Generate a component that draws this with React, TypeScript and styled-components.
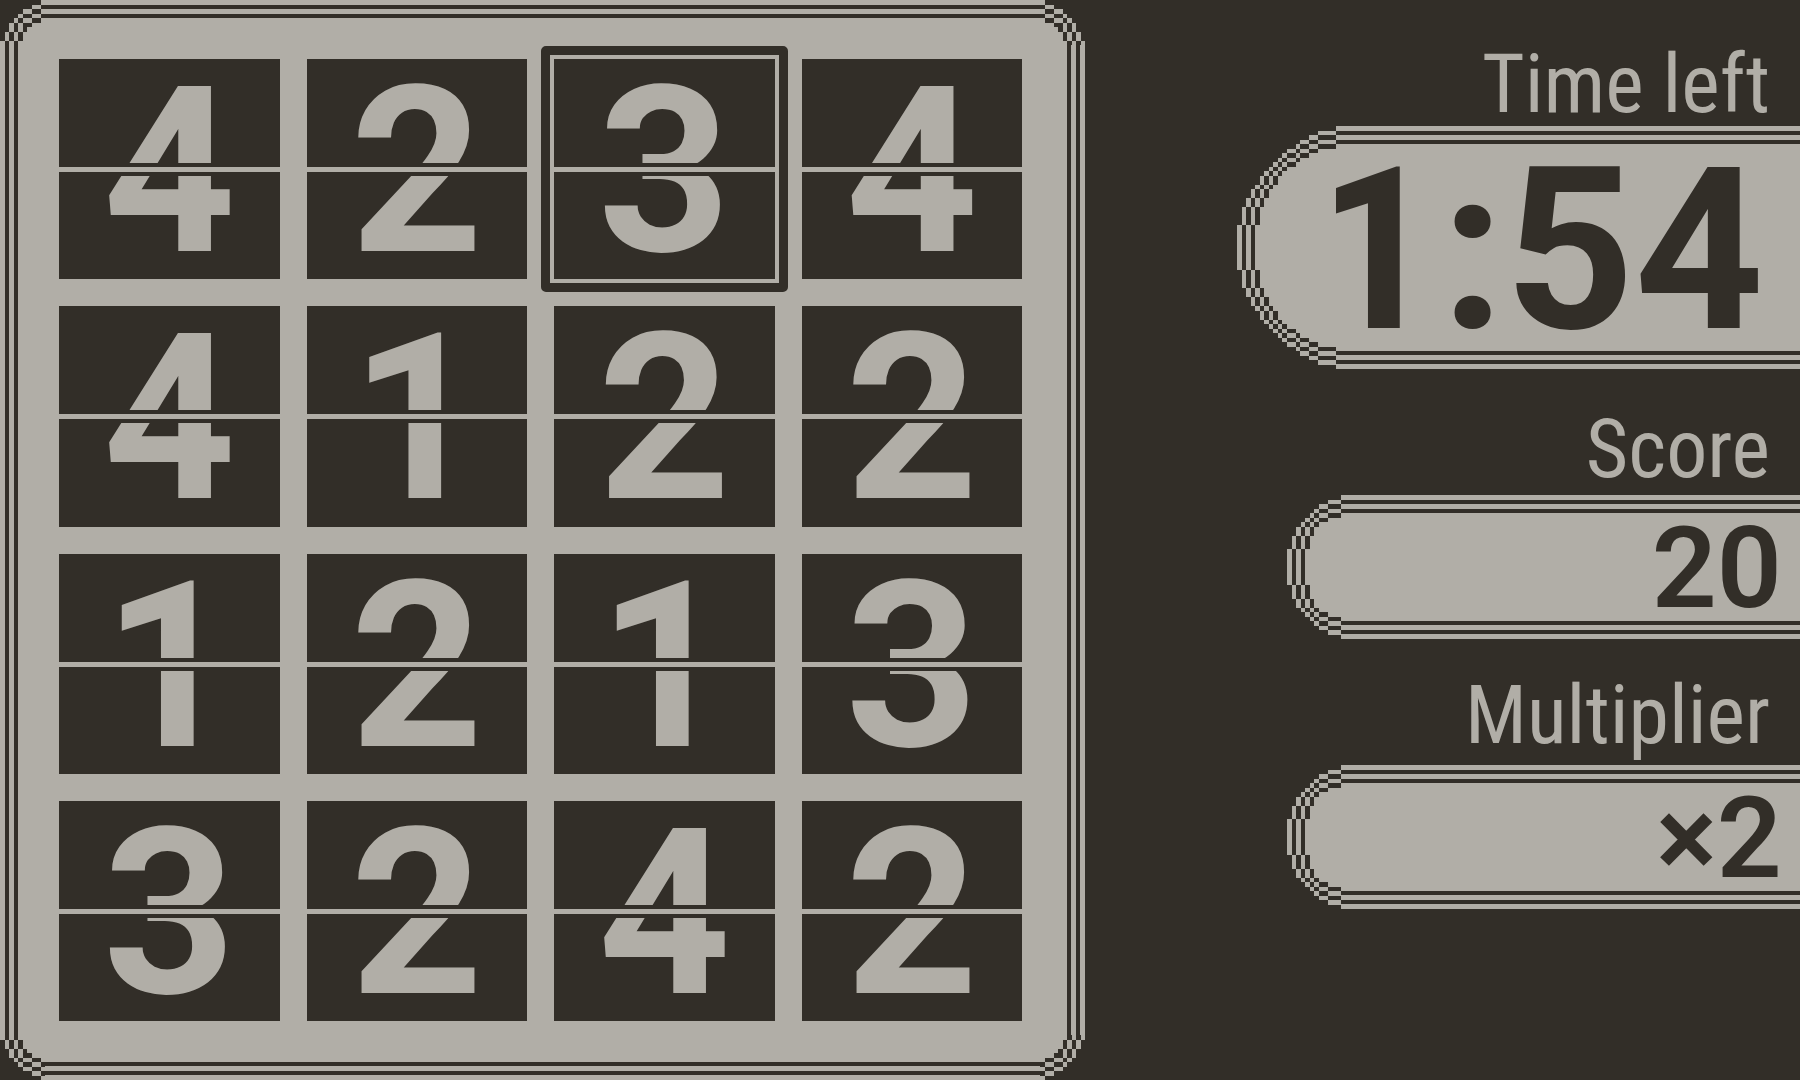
import React, { useState } from "react";
import styled, { createGlobalStyle } from "styled-components";

const INK = "#322e28";
const PAPER = "#b1aea7";
const CELL = 4.5;

const GlobalStyle = createGlobalStyle`
  *, *::before, *::after { box-sizing: border-box; }
  body { margin: 0; background: ${INK}; color: ${PAPER}; font-family: Roboto, "Liberation Sans", sans-serif; }
`;

// Stepped corner outlines: for each column, how many cells lie outside the frame.
const PROFILES = {
  board: [9, 7, 5, 4, 3, 2, 2, 1, 1, 0],
  small: [12, 9, 7, 6, 5, 4, 3, 2, 2, 1, 1, 1],
  large: [22, 18, 16, 14, 13, 11, 10, 9, 8, 7, 6, 5, 5, 4, 3, 3, 2, 2, 1, 1, 1, 1],
};
type FrameKind = keyof typeof PROFILES;
type Spot = "tl" | "tr" | "bl" | "br";

const FLIPS: Record<Spot, string> = {
  tl: "top: 0; left: 0;",
  tr: "top: 0; right: 0; transform: scaleX(-1);",
  bl: "bottom: 0; left: 0; transform: scaleY(-1);",
  br: "bottom: 0; right: 0; transform: scale(-1, -1);",
};

const CornerSvg = styled.svg<{ $spot: Spot }>`
  position: absolute;
  display: block;
  pointer-events: none;
  ${({ $spot }) => FLIPS[$spot]}
`;

function Corner({ kind, spot }: { kind: FrameKind; spot: Spot }) {
  const p = PROFILES[kind];
  const n = p.length;
  const cells: React.ReactElement[] = [];
  for (let y = 0; y < n; y++) {
    for (let x = 0; x < n; x++) {
      const depth = Math.min(y - p[x], x - p[y]);
      const dark = depth < 0 || depth === 1 || depth === 3;
      if (dark) {
        cells.push(
          <rect key={`${x}-${y}`} x={x * CELL} y={y * CELL} width={CELL} height={CELL} fill={INK} />
        );
      }
    }
  }
  return (
    <CornerSvg $spot={spot} width={n * CELL} height={n * CELL} shapeRendering="crispEdges" aria-hidden="true">
      <rect width={n * CELL} height={n * CELL} fill={PAPER} />
      {cells}
    </CornerSvg>
  );
}

const Screen = styled.main`
  display: grid;
  grid-template-columns: minmax(0, 1085fr) minmax(0, 715fr);
  min-height: 100vh;
`;

const Board = styled.section`
  position: relative;
  display: grid;
  grid-template-columns: repeat(4, 1fr);
  grid-template-rows: repeat(4, 1fr);
  gap: 27px;
  padding: 59px 63px 59px 59px;
  background: ${PAPER};
  box-shadow: inset 0 0 0 5px ${PAPER}, inset 0 0 0 9px ${INK},
    inset 0 0 0 14px ${PAPER}, inset 0 0 0 18px ${INK};
`;

const Tile = styled.button<{ $selected: boolean }>`
  position: relative;
  display: grid;
  place-items: center;
  padding: 6px 0 0;
  border: 0;
  background: ${INK};
  color: ${PAPER};
  font-family: inherit;
  font-size: 232px;
  font-weight: 700;
  line-height: 212px;
  height: 100%;
  min-height: 0;
  outline: none;
  cursor: pointer;

  &::before {
    content: "";
    position: absolute;
    left: 0;
    right: 0;
    top: calc(50% - 6px);
    height: 13px;
    background: ${PAPER};
    border: solid ${INK};
    border-width: 4px 0;
  }

  &::after {
    content: "";
    display: ${({ $selected }) => ($selected ? "block" : "none")};
    position: absolute;
    inset: -13px;
    border: 9px solid ${INK};
    border-radius: 5px;
  }
`;

const Sidebar = styled.aside`
  display: flex;
  flex-direction: column;
  align-items: stretch;
`;

const Stat = styled.div<{ $indent: number }>`
  padding-left: ${({ $indent }) => $indent}px;
`;

const Label = styled.h2<{ $lift: number }>`
  display: flex;
  justify-content: flex-end;
  align-items: flex-end;
  height: 126px;
  margin: 0;
  padding: 0 30px ${({ $lift }) => $lift}px 0;
  font-family: "Roboto Condensed", "Liberation Sans Narrow", "Liberation Sans", sans-serif;
  font-size: 82px;
  font-weight: 400;
  line-height: 80px;
  white-space: nowrap;
`;

const Pill = styled.div<{ $large?: boolean }>`
  position: relative;
  display: flex;
  align-items: center;
  justify-content: flex-end;
  height: ${({ $large }) => ($large ? 243 : 144)}px;
  padding-top: ${({ $large }) => ($large ? 6 : 2)}px;
  padding-right: ${({ $large }) => ($large ? 36 : 18)}px;
  color: ${INK};
  background: linear-gradient(
    ${PAPER} 5px, ${INK} 5px 9px, ${PAPER} 9px 14px, ${INK} 14px 18px, ${PAPER} 18px calc(100% - 18px),
    ${INK} calc(100% - 18px) calc(100% - 14px), ${PAPER} calc(100% - 14px) calc(100% - 9px),
    ${INK} calc(100% - 9px) calc(100% - 5px), ${PAPER} calc(100% - 5px)
  );
  font-size: ${({ $large }) => ($large ? 226 : 114)}px;
  font-weight: ${({ $large }) => ($large ? 700 : 600)};
  line-height: 1;

  &::before {
    content: "";
    position: absolute;
    left: 0;
    top: 54px;
    bottom: 54px;
    width: 18px;
    background: linear-gradient(90deg, ${PAPER} 5px, ${INK} 5px 9px, ${PAPER} 9px 14px, ${INK} 14px);
  }
`;

const TILES = [4, 2, 3, 4, 4, 1, 2, 2, 1, 2, 1, 3, 3, 2, 4, 2];

const STATS: { label: string; value: string; kind: FrameKind; indent: number; lift: number }[] = [
  { label: "Time left", value: "1:54", kind: "large", indent: 152, lift: 2 },
  { label: "Score", value: "20", kind: "small", indent: 202, lift: 6 },
  { label: "Multiplier", value: "×2", kind: "small", indent: 202, lift: 10 },
];

export default function App() {
  const [selected, setSelected] = useState(2);
  return (
    <>
      <GlobalStyle />
      <Screen>
        <Board aria-label="Board">
          <Corner kind="board" spot="tl" />
          <Corner kind="board" spot="tr" />
          <Corner kind="board" spot="bl" />
          <Corner kind="board" spot="br" />
          {TILES.map((n, i) => (
            <Tile key={i} type="button" $selected={i === selected} aria-pressed={i === selected} onClick={() => setSelected(i)}>
              {n}
            </Tile>
          ))}
        </Board>
        <Sidebar>
          {STATS.map((s) => (
            <Stat key={s.label} $indent={s.indent}>
              <Label $lift={s.lift}>{s.label}</Label>
              <Pill $large={s.kind === "large"}>
                <Corner kind={s.kind} spot="tl" />
                <Corner kind={s.kind} spot="bl" />
                {s.value}
              </Pill>
            </Stat>
          ))}
        </Sidebar>
      </Screen>
    </>
  );
}
